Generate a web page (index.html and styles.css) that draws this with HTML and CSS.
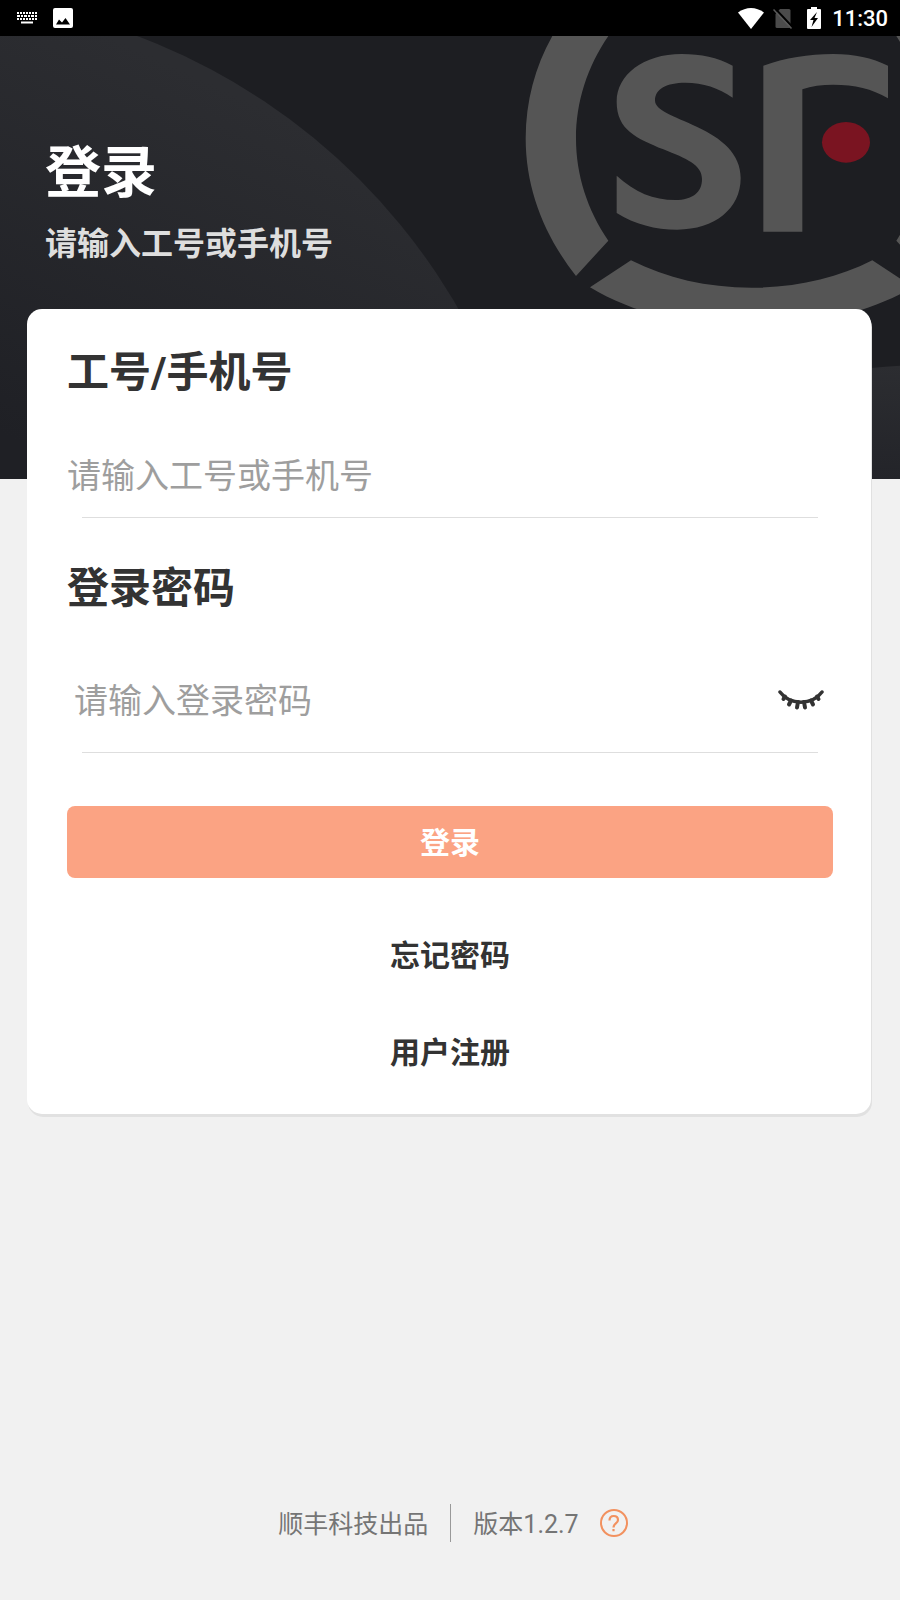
FILE: index.html
```html
<!DOCTYPE html>
<html lang="zh-CN">
<head>
<meta charset="utf-8">
<meta name="viewport" content="width=device-width, initial-scale=1">
<title>登录</title>
<link rel="stylesheet" href="styles.css">
</head>
<body class="page">
  <div class="status">
    <svg class="status-keyboard" width="20" height="12" viewBox="0 0 20 12" fill="none" stroke="#fff" aria-hidden="true">
      <path d="M0 1h20M0 7h20" stroke-width="2" stroke-dasharray="2 1"/>
      <path d="M0 4h20" stroke-width="2" stroke-dasharray="3 1 2 1"/>
      <path d="M4 10.500h12" stroke-width="2"/>
    </svg>
    <svg width="20" height="20" viewBox="0 0 20 20" aria-hidden="true">
      <path fill="#fff" fill-rule="evenodd" d="M2 0h16a2 2 0 0 1 2 2v16a2 2 0 0 1-2 2H2a2 2 0 0 1-2-2V2a2 2 0 0 1 2-2zM3 16.500h14L12.500 10 9 14.500 6 11.500z"/>
    </svg>
    <div class="status-right">
      <svg width="26" height="21" viewBox="0 0 26 21" aria-hidden="true"><path fill="#fff" d="M0 4.500C8-1.500 18-1.500 26 4.500L13 21z"/></svg>
      <svg class="status-sim" width="20" height="21" viewBox="0 0 20 21" aria-hidden="true">
        <path fill="#4b4b4b" d="M7 1h9a1.500 1.500 0 0 1 1.500 1.500v16A1.500 1.500 0 0 1 16 20H4a1.500 1.500 0 0 1-1.500-1.500V6z"/>
        <path d="M2.500 1 20.500 20" stroke="#000" stroke-width="2"/>
        <path d="M.500 1.500 18.500 20.500" stroke="#5a5a5a" stroke-width="1.500"/>
      </svg>
      <svg class="status-battery" width="14" height="22" viewBox="0 0 14 22" aria-hidden="true">
        <path fill="#fff" d="M4 0h6v2h3a1 1 0 0 1 1 1v18a1 1 0 0 1-1 1H1a1 1 0 0 1-1-1V3a1 1 0 0 1 1-1h3z"/>
        <path fill="#000" d="M10 5 3 13h3.500l-2 7 6.500-9H7.500z"/>
      </svg>
      <time class="status-time">11:30</time>
    </div>
  </div>

  <header class="hero">
    <svg class="hero-art" viewBox="0 36 900 443" preserveAspectRatio="xMaxYMin slice" aria-hidden="true">
      <defs>
        <linearGradient id="disc" x1="270" y1="110" x2="100" y2="479" gradientUnits="userSpaceOnUse">
          <stop offset="0" stop-color="#2c2d31"/><stop offset="1" stop-color="#1f2025"/>
        </linearGradient>
        <linearGradient id="hill" x1="0" y1="365" x2="0" y2="479" gradientUnits="userSpaceOnUse">
          <stop offset="0" stop-color="#2c2d31"/><stop offset="1" stop-color="#232429"/>
        </linearGradient>
      </defs>
      <circle cx="-83" cy="621" r="625" fill="url(#disc)"/>
      <circle cx="930" cy="965" r="600" fill="url(#hill)"/>
      <g transform="translate(500 30) scale(.33333)" fill="#555">
        <path d="M157 18C105 110 77 215 77 325C77 480 135 620 228 738L325 632C262 540 228 435 228 325C228 215 262 110 325 18Z"/>
        <path d="M1353 18C1405 110 1432 215 1432 325C1432 480 1375 620 1282 738L1189 632C1248 540 1282 435 1282 325C1282 215 1248 110 1189 18Z"/>
        <path d="M270 772L393 691C500 745 620 773 755 773C890 773 1010 745 1117 691L1240 772C1100 850 940 890 755 890C560 890 400 850 270 772Z"/>
        <path d="M698 107C650 82 605 72 545 72C430 72 350 135 350 215C350 300 410 325 490 358C560 386 606 405 606 447C606 487 578 510 526 510C460 510 405 487 350 437V549C405 583 465 599 532 599C645 599 722 535 722 445C722 370 665 325 590 290C520 258 465 242 465 211C465 177 500 158 556 158C610 158 655 174 698 203Z"/>
        <path d="M790 107C855 84 925 72 1000 72C1065 72 1115 84 1164 107V205C1115 176 1065 164 1000 164C965 164 935 168 907 178V605H790Z"/>
        <ellipse cx="1038" cy="337" rx="72" ry="61" fill="#7a1421"/>
      </g>
    </svg>
    <h1 class="hero-title">登录</h1>
    <p class="hero-sub">请输入工号或手机号</p>
  </header>

  <main class="main">
    <form class="card">
      <label class="label" for="account">工号/手机号</label>
      <div class="field">
        <input class="input" id="account" type="text" placeholder="请输入工号或手机号">
      </div>
      <label class="label label-next" for="password">登录密码</label>
      <div class="field field-password">
        <input class="input" id="password" type="password" placeholder="请输入登录密码">
        <button class="eye" type="button" aria-label="显示密码">
          <svg width="46" height="22" viewBox="0 0 46 22" fill="none" stroke="#333" stroke-width="3.500" stroke-linecap="round" aria-hidden="true">
            <path d="M2 2C12 15.500 34 15.500 44 2"/>
            <path stroke-width="4" d="M7 6.500 5.500 9M13 10.500l-2 4M20 12l-1 5.500M26 12l1 5.500M33 10.500l2 4M39 6.500l1.500 2.500"/>
          </svg>
        </button>
      </div>
      <button class="submit" type="submit">登录</button>
      <nav class="links">
        <a class="link" href="#forgot">忘记密码</a>
        <a class="link" href="#register">用户注册</a>
      </nav>
    </form>
  </main>

  <footer class="footer">
    <span class="maker">顺丰科技出品</span>
    <span class="version">版本1.2.7</span>
    <button class="help" type="button" aria-label="帮助">
      <svg width="28" height="28" viewBox="0 0 28 28" fill="none" stroke="#f2915f" stroke-width="2" aria-hidden="true">
        <circle cx="14" cy="14" r="13"/>
        <path stroke-width="2.200" d="M9.500 11.500C9.500 8.500 11.500 7 13.700 7c2.500 0 4.300 1.600 4.300 4 0 3.500-4.500 3.500-4.500 7.500M13.500 20v2.200"/>
      </svg>
    </button>
  </footer>
</body>
</html>
```

FILE: styles.css
```css
* {
  box-sizing: border-box;
}

.page {
  display: flex;
  flex-direction: column;
  min-height: 100vh;
  margin: 0;
  background: #f1f1f1;
  color: #333;
  font-family: Roboto, "Noto Sans CJK SC", sans-serif;
}

.page svg {
  display: block;
}

.status {
  display: flex;
  align-items: center;
  gap: 16px;
  height: 36px;
  padding: 0 12px 0 17px;
  background: #000;
  color: #fff;
}

.status-right {
  display: flex;
  align-items: center;
  margin-left: auto;
}

.status-sim {
  margin-left: 9px;
}

.status-battery {
  margin: 0 11px 0 14px;
}

.status-time {
  padding-top: 2px;
  font-size: 22px;
  font-weight: 500;
  line-height: 34px;
}

.hero {
  position: relative;
  padding: 103px 45px 211px;
  overflow: hidden;
  background: #1d1e22;
}

.hero-art {
  position: absolute;
  inset: 0;
  width: 100%;
  height: 100%;
}

.hero-title {
  position: relative;
  margin: 0;
  color: #fff;
  font-size: 56px;
  font-weight: 700;
  line-height: 68px;
}

.hero-sub {
  position: relative;
  margin: 13px 0 0;
  color: #dedede;
  font-size: 32px;
  font-weight: 700;
  line-height: 48px;
}

.main {
  position: relative;
  margin-top: -170px;
  padding: 0 29px 0 27px;
}

.card {
  padding: 40px 38px 37px 40px;
  border-radius: 15px;
  background: #fff;
  box-shadow: 1px 3px 0 #e1e1e1;
}

.label {
  display: block;
  font-size: 42px;
  font-weight: 700;
  line-height: 48px;
}

.label-next {
  margin-top: 47px;
}

.field {
  display: flex;
  align-items: center;
  height: 121px;
  padding-top: 36px;
  background: linear-gradient(#dedede, #dedede) center bottom / calc(100% - 30px) 1px no-repeat;
}

.field-password {
  height: 140px;
  padding: 36px 9px 0 7px;
}

.input {
  flex: 1;
  min-width: 0;
  height: 72px;
  padding: 0;
  border: 0;
  outline: 0;
  background: transparent;
  color: #333;
  font: inherit;
  font-size: 34px;
}

.input::placeholder {
  color: #9e9e9e;
  opacity: 1;
}

.eye,
.help {
  padding: 0;
  border: 0;
  background: none;
}

.submit {
  display: block;
  width: 100%;
  height: 72px;
  margin-top: 53px;
  padding: 0 0 5px;
  border: 0;
  border-radius: 8px;
  background: #fba383;
  color: #fff;
  font: inherit;
  font-size: 30px;
  font-weight: 700;
}

.links {
  display: flex;
  flex-direction: column;
  align-items: center;
  gap: 49px;
  margin-top: 54px;
}

.link {
  color: #333;
  font-size: 30px;
  font-weight: 700;
  line-height: 48px;
  text-decoration: none;
}

.footer {
  display: flex;
  align-items: center;
  justify-content: center;
  margin-top: auto;
  padding: 0 0 58px 6px;
  color: #757575;
  font-size: 25px;
  line-height: 34px;
}

.maker {
  padding: 4px 22px 0 0;
  border-right: 1px solid #999;
}

.version {
  padding: 4px 21px 0 22px;
}
```
